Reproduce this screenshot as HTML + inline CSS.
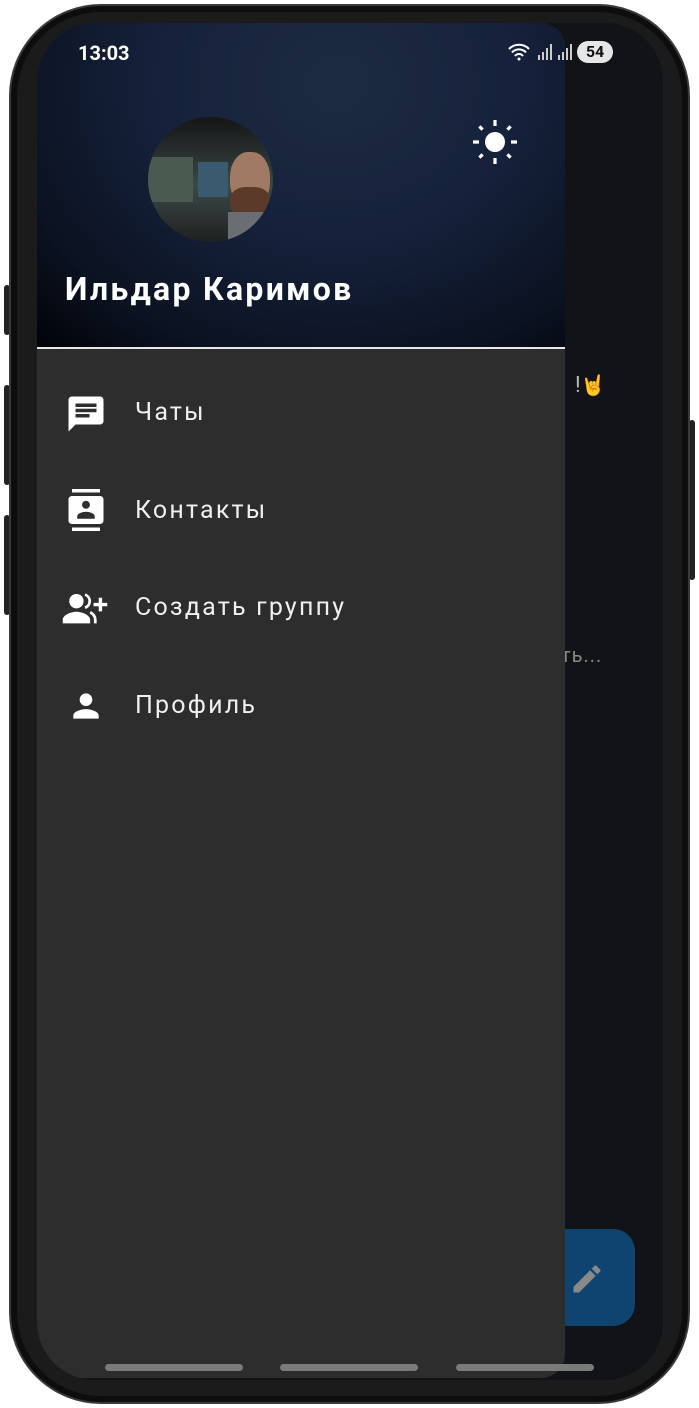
<!DOCTYPE html>
<html><head><meta charset="utf-8"><style>
*{margin:0;padding:0;box-sizing:border-box}
body{width:699px;height:1408px;background:#fff;position:relative;overflow:hidden;font-family:"Roboto","Liberation Sans","DejaVu Sans",sans-serif}
.phone{position:absolute;left:9px;top:4px;width:681px;height:1400px;border-radius:92px;background:#1b1b1b;border:2px solid #3a3a3a;box-shadow:inset 0 0 0 6px #0d0d0d}
.btn{position:absolute;background:#222;border-radius:3px}
.screen{position:absolute;left:37px;top:23px;width:626px;height:1357px;border-radius:58px;background:#111317;overflow:hidden}
.drawer{position:absolute;left:0;top:0;width:528px;height:1355px;background:#2d2d2d;border-radius:0 24px 24px 0;overflow:hidden}
.header{position:absolute;left:0;top:0;width:528px;height:324px;background:radial-gradient(ellipse 420px 360px at 300px 60px,#1d2b42 0%,#15213a 45%,#0b1220 80%,#02040a 100%)}
.line{position:absolute;left:0;top:324px;width:528px;height:2px;background:#e8e8e8}
.t{position:absolute;color:#fff}
.item{position:absolute;left:98px;font-size:25px;color:#f0f0f0;letter-spacing:2.2px}
.ic{position:absolute;left:28px}
.bar{position:absolute;top:1341px;height:7px;width:138px;border-radius:4px;background:#7a7a7a}
</style></head><body>
<div class="btn" style="left:4px;top:285px;width:6px;height:50px"></div>
<div class="btn" style="left:4px;top:385px;width:6px;height:100px"></div>
<div class="btn" style="left:4px;top:515px;width:6px;height:100px"></div>
<div class="btn" style="left:689px;top:420px;width:6px;height:160px"></div>
<div class="phone"></div>
<div class="screen">
  <div class="t" style="left:538px;top:350px;font-size:22px;color:#bbb">!<span style="font-size:20px">🤘</span></div>
  <div class="t" style="left:524px;top:620px;font-size:20px;color:#888;letter-spacing:1px">ть...</div>
  <div style="position:absolute;left:496px;top:1206px;width:102px;height:97px;border-radius:22px;background:#0f4470"></div>
  <svg style="position:absolute;left:532px;top:1238px" width="36" height="36" viewBox="0 0 24 24"><path fill="#888" d="M3 17.25V21h3.75L17.81 9.94l-3.75-3.75L3 17.25zM20.71 7.04a1 1 0 0 0 0-1.41l-2.34-2.34a1 1 0 0 0-1.41 0l-1.83 1.83 3.75 3.75 1.83-1.83z"/></svg>
  <div class="drawer">
    <div class="header"></div>
    <div class="line"></div>
    <div style="position:absolute;left:111px;top:94px;width:125px;height:125px;border-radius:50%;overflow:hidden;background:linear-gradient(180deg,#151515 0%,#2a3030 30%,#3a4a48 55%,#202020 100%)">
      <div style="position:absolute;left:0;top:40px;width:45px;height:45px;background:#4a5a50"></div>
      <div style="position:absolute;left:50px;top:45px;width:30px;height:35px;background:#3a5a70"></div>
      <div style="position:absolute;left:82px;top:35px;width:40px;height:55px;border-radius:45%;background:#a07a62"></div>
      <div style="position:absolute;left:82px;top:70px;width:40px;height:30px;border-radius:40%;background:#5a3a28"></div>
      <div style="position:absolute;left:80px;top:95px;width:45px;height:30px;background:#6a6e72"></div>
    </div>
    <svg style="position:absolute;left:434px;top:95px" width="48" height="48" viewBox="0 0 24 24"><circle cx="12" cy="12" r="5" fill="#fff"/><g stroke="#fff" stroke-width="1.6"><path d="M12 1v3M12 20v3M1 12h3M20 12h3M4.2 4.2l1.6 1.6M18.2 18.2l1.6 1.6M4.2 19.8l1.6-1.6M18.2 5.8l1.6-1.6"/></g></svg>
    <div class="t" style="left:28px;top:247px;font-size:32px;font-weight:bold;letter-spacing:2.3px">Ильдар Каримов</div>
    <div class="t" style="left:41px;top:18px;font-size:20px;font-weight:bold">13:03</div>

    <svg class="ic" style="top:370px" width="42" height="42" viewBox="0 0 24 24"><path fill="#fff" d="M20 2H4c-1.1 0-2 .9-2 2v18l4-4h14c1.1 0 2-.9 2-2V4c0-1.1-.9-2-2-2zM6 9h12v2H6V9zm8 5H6v-2h8v2zm4-6H6V6h12v2z"/></svg>
    <div class="item" style="top:375px">Чаты</div>
    <svg class="ic" style="top:466px" width="42" height="42" viewBox="0 0 24 24"><path fill="#fff" d="M20 0H4v2h16V0zM4 24h16v-2H4v2zM20 4H4c-1.1 0-2 .9-2 2v12c0 1.1.9 2 2 2h16c1.1 0 2-.9 2-2V6c0-1.1-.9-2-2-2zm-8 2.75c1.24 0 2.25 1.01 2.25 2.25s-1.01 2.25-2.25 2.25S9.75 10.24 9.75 9 10.76 6.75 12 6.75zM17 17H7v-1.5c0-1.67 3.33-2.5 5-2.5s5 .83 5 2.5V17z"/></svg>
    <div class="item" style="top:473px">Контакты</div>
    <svg class="ic" style="top:564px;left:24px" width="48" height="42" viewBox="0 0 28 24"><circle cx="9" cy="8" r="4.2" fill="#fff"/><path fill="#fff" d="M1 21v-2c0-3 5-4.8 8-4.8s8 1.8 8 4.8v2z"/><path fill="none" stroke="#fff" stroke-width="1.6" d="M14 4.2a4 4 0 0 1 0 7.6M17 14.5c2 1 3 2.3 3 4.5v2"/><path fill="#fff" d="M22 6h2v3h3v2h-3v3h-2v-3h-3V9h3z"/></svg>
    <div class="item" style="top:570px">Создать группу</div>
    <svg class="ic" style="top:664px;left:30px" width="38" height="38" viewBox="0 0 24 24"><path fill="#fff" d="M12 12c2.21 0 4-1.79 4-4s-1.79-4-4-4-4 1.79-4 4 1.79 4 4 4zm0 2c-2.67 0-8 1.34-8 4v2h16v-2c0-2.66-5.33-4-8-4z"/></svg>
    <div class="item" style="top:668px">Профиль</div>
  </div>
  <div style="position:absolute;left:470px;top:18px;display:flex;align-items:center;gap:4px">
    <svg width="26" height="20" viewBox="0 0 26 20"><g fill="none" stroke="#fff" stroke-width="2"><path d="M2 7a14 14 0 0 1 20 0M5 10.5a9.5 9.5 0 0 1 14 0M8 14a5 5 0 0 1 8 0"/></g><circle cx="12" cy="17" r="1.5" fill="#fff"/></svg>
    <svg width="16" height="18"><g fill="#ccc"><rect x="1" y="12" width="2" height="5"/><rect x="5" y="9" width="2" height="8"/><rect x="9" y="5" width="2" height="12"/><rect x="13" y="1" width="2" height="16"/></g></svg>
    <svg width="16" height="18"><g fill="#ccc"><rect x="1" y="12" width="2" height="5"/><rect x="5" y="9" width="2" height="8"/><rect x="9" y="5" width="2" height="12"/><rect x="13" y="1" width="2" height="16"/></g></svg>
    <div style="width:36px;height:22px;border-radius:11px;background:#e6e6e6;color:#111;font-size:16px;font-weight:bold;text-align:center;line-height:22px">54</div>
  </div>
  <div class="bar" style="left:68px"></div>
  <div class="bar" style="left:243px"></div>
  <div class="bar" style="left:419px"></div>
</div>
</body></html>
